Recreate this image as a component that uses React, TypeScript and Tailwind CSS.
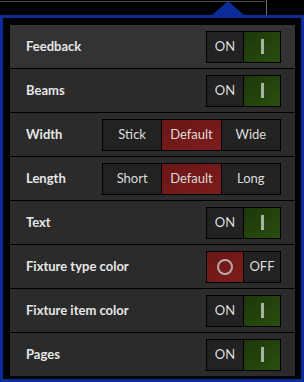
import React from "react";

type Row =
  | { label: string; kind: "toggle"; on: boolean }
  | { label: string; kind: "choice"; options: string[]; selected: number };

const rows: Row[] = [
  { label: "Feedback", kind: "toggle", on: true },
  { label: "Beams", kind: "toggle", on: true },
  { label: "Width", kind: "choice", options: ["Stick", "Default", "Wide"], selected: 1 },
  { label: "Length", kind: "choice", options: ["Short", "Default", "Long"], selected: 1 },
  { label: "Text", kind: "toggle", on: true },
  { label: "Fixture type color", kind: "toggle", on: false },
  { label: "Fixture item color", kind: "toggle", on: true },
  { label: "Pages", kind: "toggle", on: true },
];

const Toggle: React.FC<{ on: boolean }> = ({ on }) => (
  <div className="flex h-[32px] w-[75px] border border-black bg-black gap-px">
    {on ? (
      <>
        <div className="flex flex-1 items-center justify-center bg-[#222222] text-[13px] text-[#dcdcdc]">ON</div>
        <div className="flex flex-1 items-center justify-center bg-gradient-to-br from-[#1c3809] to-[#2a4f0f]">
          <div className="h-[15px] w-[3px] bg-[#a9b3a2]" />
        </div>
      </>
    ) : (
      <>
        <div className="flex flex-1 items-center justify-center bg-gradient-to-br from-[#6a1616] to-[#7e1c1c]">
          <div className="h-[16px] w-[16px] rounded-full border-2 border-[#b9a9a9]" />
        </div>
        <div className="flex flex-1 items-center justify-center bg-[#222222] text-[13px] text-[#dcdcdc]">OFF</div>
      </>
    )}
  </div>
);

const Choice: React.FC<{ options: string[]; selected: number }> = ({ options, selected }) => (
  <div className="flex h-[32px] w-[179px] border border-black bg-black gap-px">
    {options.map((o, i) => (
      <div
        key={o}
        className={`flex flex-1 items-center justify-center text-[13px] text-[#dcdcdc] ${
          i === selected ? "bg-gradient-to-br from-[#6a1616] to-[#7e1c1c]" : "bg-[#222222]"
        }`}
      >
        {o}
      </div>
    ))}
  </div>
);

export default function App() {
  return (
    <div className="relative h-[382px] w-[304px] overflow-hidden bg-black" style={{ fontFamily: "Lato, 'Noto Sans', sans-serif" }}>
      {/* top chrome */}
      <div className="absolute left-0 top-[1px] h-px w-[265px] bg-[#4a4a4a]" />
      <div className="absolute left-[266px] top-0 h-[15px] w-px bg-[#6a6a6a]" />
      <svg className="absolute left-[211px] top-[1px]" width="34" height="15" viewBox="0 0 34 15">
        <polygon points="17,0 34,15 0,15" fill="#0c2c9a" />
      </svg>

      <div className="mt-[15px] h-[367px] border-[3px] border-[#0c2c9a] bg-black pb-[4px] pl-[7px] pr-[6px] pt-[7px]">
        <div className="flex flex-col gap-px bg-black">
          {rows.map((r, i) => (
            <div
              key={r.label}
              className={`flex h-[43px] items-center justify-between pl-[16px] pr-[14px] ${
                i === 0 ? "bg-[#333333]" : "bg-[#2b2b2b]"
              }`}
            >
              <span className="text-[13px] font-bold text-[#e6e6e6]">{r.label}</span>
              {r.kind === "toggle" ? <Toggle on={r.on} /> : <Choice options={r.options} selected={r.selected} />}
            </div>
          ))}
        </div>
      </div>
    </div>
  );
}
